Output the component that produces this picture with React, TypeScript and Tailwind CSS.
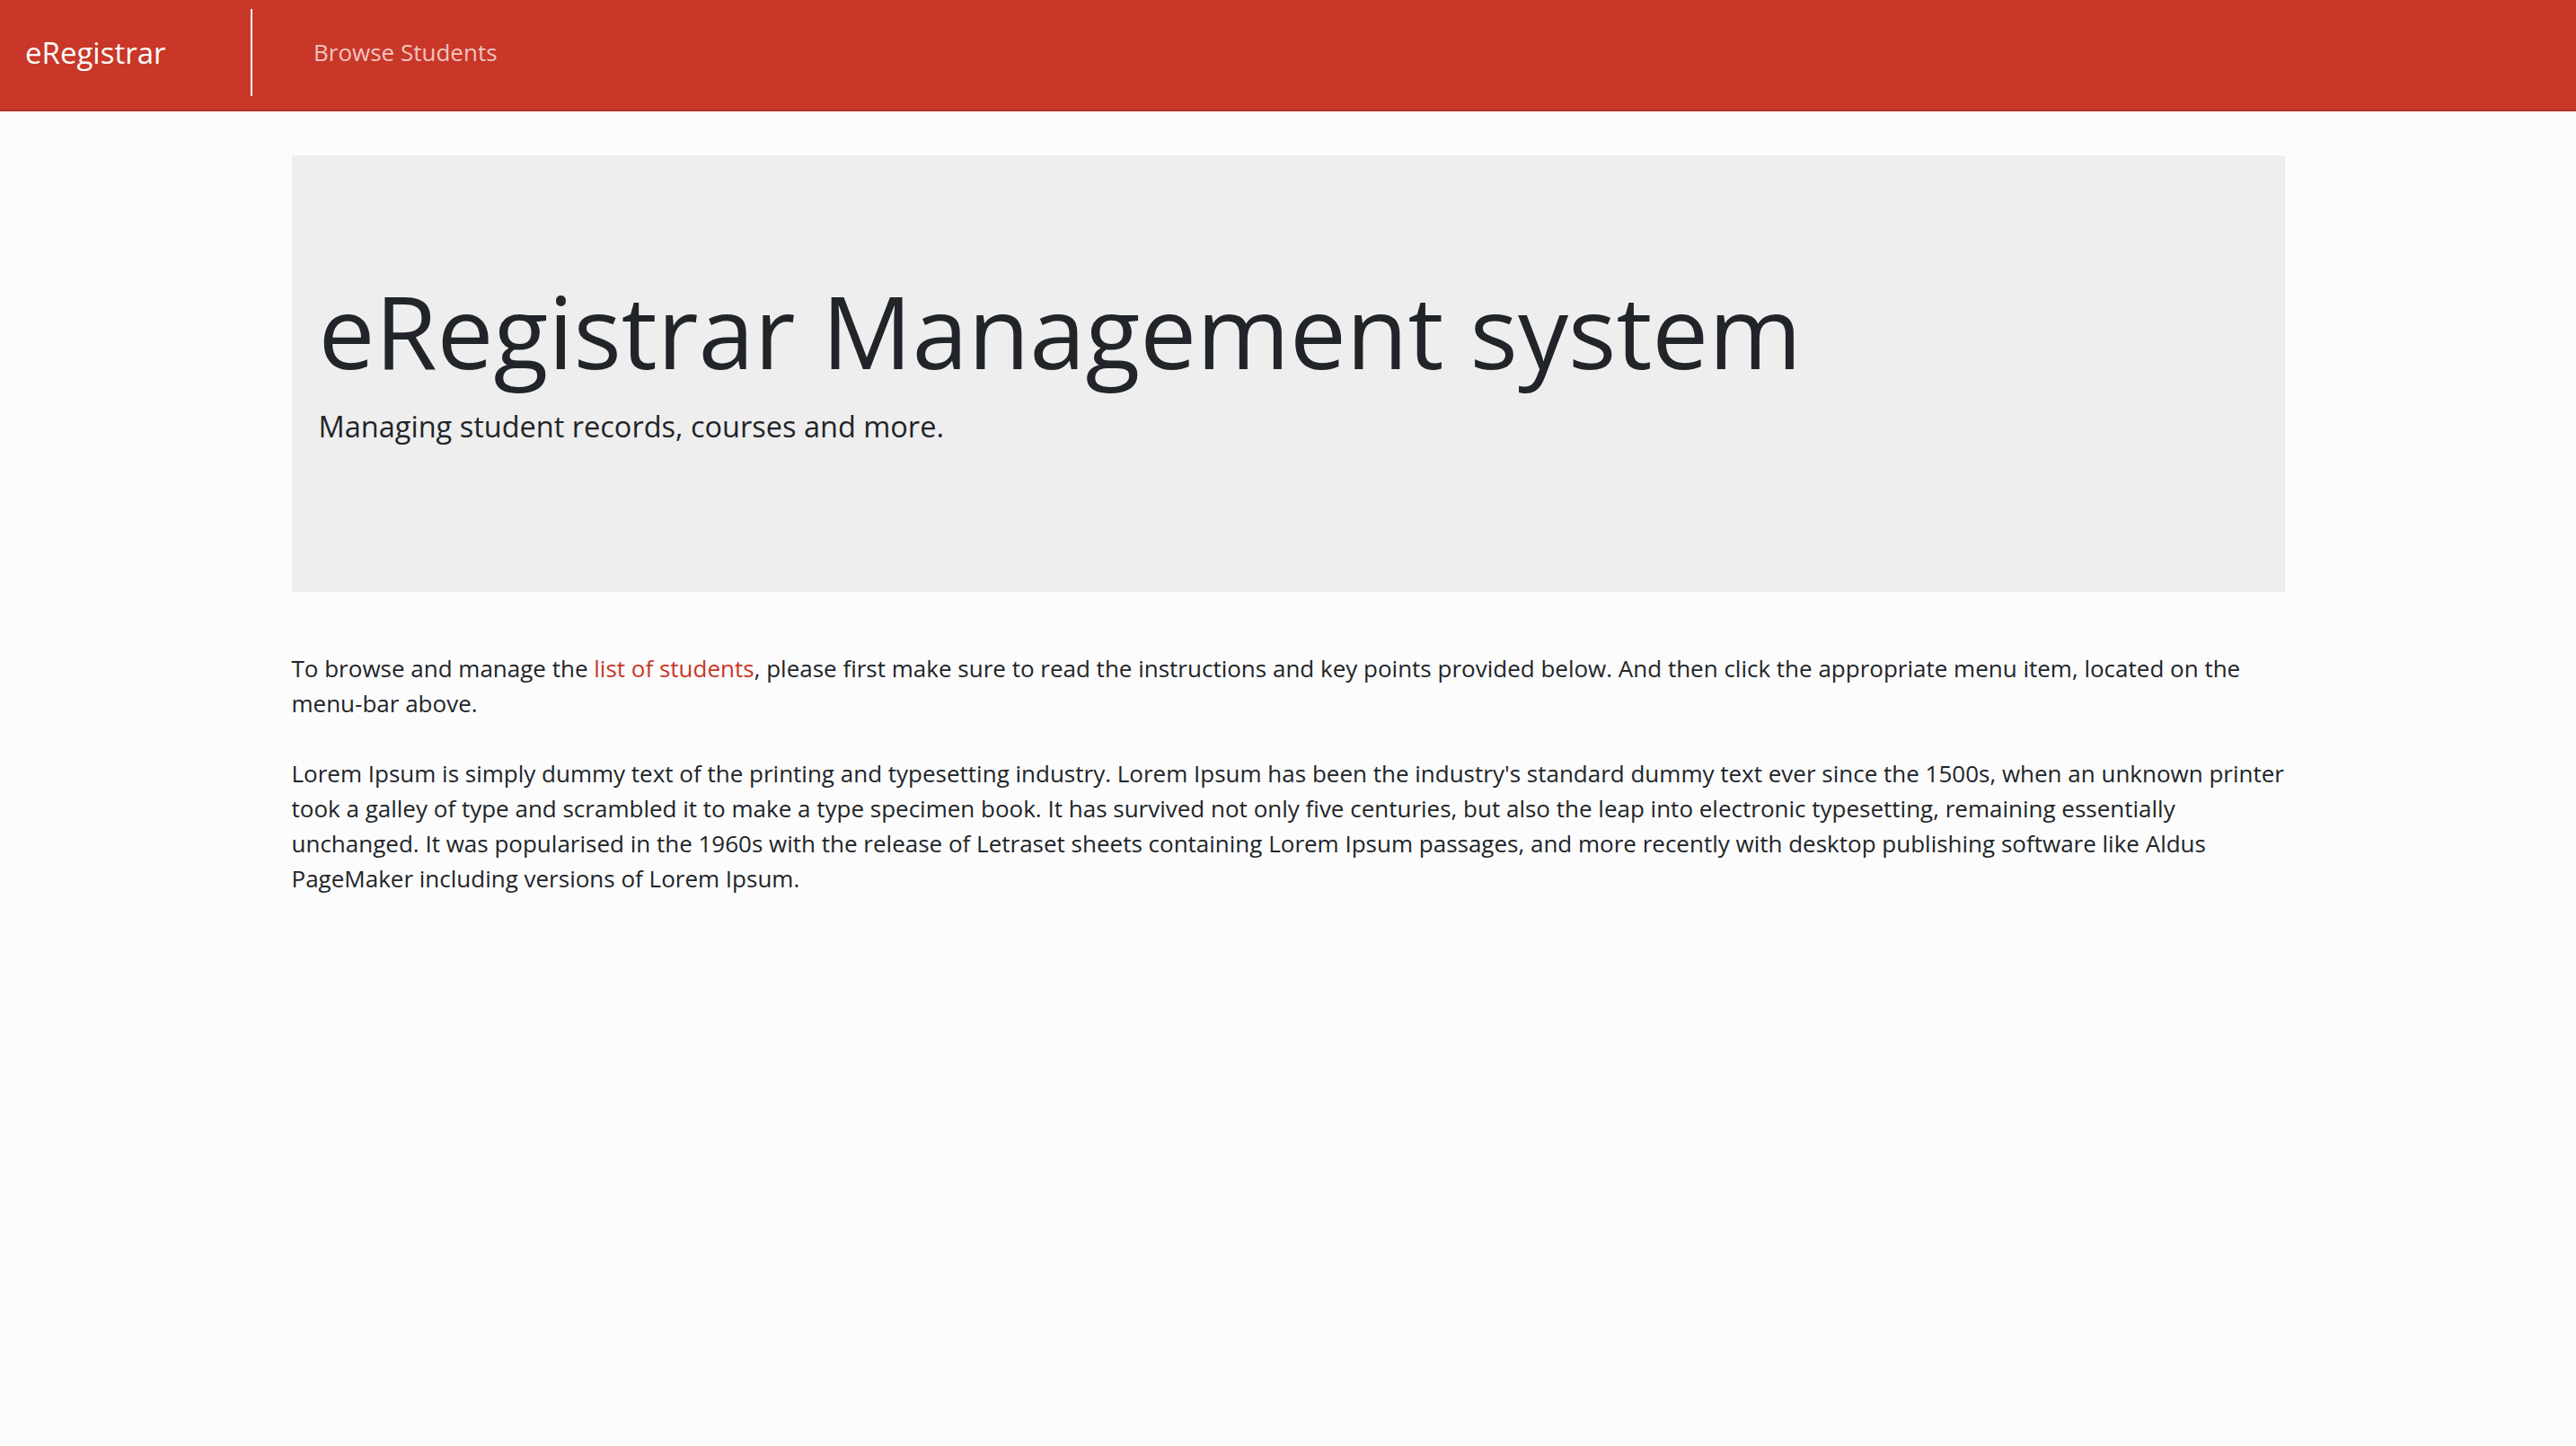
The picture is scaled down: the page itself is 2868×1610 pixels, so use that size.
import React from "react";

export default function App() {
  const font = { fontFamily: '"Open Sans", "Noto Sans", sans-serif' };
  return (
    <div className="min-h-screen w-full bg-[#fcfcfc] text-[#212529]" style={font}>
      <nav className="flex h-[124px] items-stretch border-b-2 border-[#b02f24] bg-[#c83727]">
        <div className="flex w-[279px] items-center pb-[5px] pl-[28px]">
          <span className="text-[33px] leading-[1.5] text-white">eRegistrar</span>
        </div>
        <div className="mb-[15px] mt-[10px] w-[2px] bg-white" />
        <div className="flex items-center pb-[5px] pl-[68px]">
          <span className="text-[26px] leading-[1.5] text-[#f1c4c0]">Browse Students</span>
        </div>
      </nav>

      <main className="mx-auto w-[2219px] pt-[49px]">
        <section className="mb-[66px] bg-[#eeeeee] px-[30px] pb-[128px] pt-[128px]">
          <h1 className="mb-[16px] text-[112px] font-normal leading-[1.2] text-[#212529]">
            eRegistrar Management system
          </h1>
          <p className="mb-[32px] text-[32.5px] leading-[48px] font-normal text-[#212529]">
            Managing student records, courses and more.
          </p>
        </section>

        <p className="mb-[39px] text-[26px] leading-[39px]">
          To browse and manage the <a className="text-[#c83727]">list of students</a>, please first make sure to read the
          instructions and key points provided below. And then click the appropriate menu item, located on the
          menu-bar above.
        </p>
        <p className="text-[26px] leading-[39px]">
          Lorem Ipsum is simply dummy text of the printing and typesetting industry. Lorem Ipsum has been the industry's
          standard dummy text ever since the 1500s, when an unknown printer took a galley of type and scrambled it to
          make a type specimen book. It has survived not only five centuries, but also the leap into electronic
          typesetting, remaining essentially unchanged. It was popularised in the 1960s with the release of Letraset
          sheets containing Lorem Ipsum passages, and more recently with desktop publishing software like Aldus
          PageMaker including versions of Lorem Ipsum.
        </p>
      </main>
    </div>
  );
}
